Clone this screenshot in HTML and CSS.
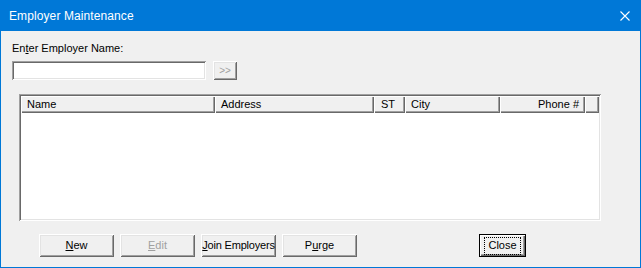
FILE: index.html
```html
<!DOCTYPE html>
<html>
<head>
<meta charset="utf-8">
<link rel="stylesheet" href="styles.css">
</head>
<body>
<div class="window">
  <div class="titlebar">
    <span class="title">Employer Maintenance</span>
    <svg class="close-x" width="10" height="10" viewBox="0 0 10 10"><path d="M0.5 0.5 L9.5 9.5 M9.5 0.5 L0.5 9.5" stroke="#fff" stroke-width="1.1" fill="none"/></svg>
  </div>
  <div class="content">
    <div class="label">En<u>t</u>er Employer Name:</div>
    <div class="search-row">
      <div class="textbox"></div>
      <div class="btn small disabled">&gt;&gt;</div>
    </div>
    <div class="listview">
      <div class="header">
        <div class="hcell c-name">Name</div>
        <div class="hcell c-addr">Address</div>
        <div class="hcell c-st">ST</div>
        <div class="hcell c-city">City</div>
        <div class="hcell c-phone">Phone #</div>
        <div class="hcell c-rest"></div>
      </div>
      <div class="rows"></div>
    </div>
    <div class="buttons">
      <div class="btn b-new"><u>N</u>ew</div>
      <div class="btn b-edit disabled"><u>E</u>dit</div>
      <div class="btn b-join"><u>J</u>oin Employers</div>
      <div class="btn b-purge">P<u>u</u>rge</div>
      <div class="btn default b-close"><span class="focus">Close</span></div>
    </div>
  </div>
</div>
</body>
</html>
```
FILE: styles.css
```css
html, body {
  margin: 0;
  padding: 0;
  background: #f0f0f0;
}
.window {
  width: 641px;
  height: 268px;
  box-sizing: border-box;
  border: 1px solid #0078d7;
  border-top: none;
  background: #f0f0f0;
  display: flex;
  flex-direction: column;
  font-family: "Liberation Sans", Arial, sans-serif;
  font-size: 11px;
  color: #000;
}
.titlebar {
  height: 31px;
  background: #0078d7;
  margin: 0 -1px;
  display: flex;
  align-items: center;
  justify-content: space-between;
  padding: 0 11px 0 9px;
  flex-shrink: 0;
}
.title {
  color: #fff;
  font-size: 12px;
  font-family: "Liberation Sans", Arial, sans-serif;
  letter-spacing: 0.1px;
}
.close-x {
  display: block;
}
.content {
  flex: 1;
  display: flex;
  flex-direction: column;
  padding: 11px 0 0 11px;
}
.label {
  line-height: 13px;
  height: 13px;
}
.label u, .btn u {
  text-decoration: underline;
  text-underline-offset: 1px;
}
.search-row {
  display: flex;
  gap: 7px;
  margin-top: 6px;
}
.textbox {
  width: 194px;
  height: 19px;
  box-sizing: border-box;
  background: #fff;
  box-shadow: inset 1px 1px #a0a0a0, inset -1px -1px #fff, inset 2px 2px #696969, inset -2px -2px #e3e3e3;
}
.btn {
  box-sizing: border-box;
  background: #f0f0f0;
  display: flex;
  align-items: center;
  justify-content: center;
  box-shadow: inset 1px 1px #fff, inset -1px -1px #696969, inset 2px 2px #e3e3e3, inset -2px -2px #a0a0a0;
  line-height: 13px;
  white-space: nowrap;
}
.btn.small {
  width: 24px;
  height: 19px;
  color: #a0a0a0;
  font-size: 10px;
  letter-spacing: 0;
  padding-bottom: 1px;
}
.btn.disabled {
  color: #a0a0a0;
}
.listview {
  margin: 14px 0 0 7px;
  width: 582px;
  height: 127px;
  box-sizing: border-box;
  padding: 2px;
  background: #fff;
  box-shadow: inset 1px 1px #a0a0a0, inset -1px -1px #fff, inset 2px 2px #696969, inset -2px -2px #e3e3e3;
  display: flex;
  flex-direction: column;
}
.header {
  display: flex;
  height: 17px;
  flex-shrink: 0;
}
.hcell {
  box-sizing: border-box;
  background: #f0f0f0;
  height: 17px;
  line-height: 15px;
  padding: 1px 6px 0 6px;
  box-shadow: inset 1px 1px #fff, inset -1px -1px #696969, inset -2px -2px #a0a0a0;
  white-space: nowrap;
  overflow: hidden;
}
.c-name { width: 194px; }
.c-addr { width: 159px; }
.c-st { width: 31px; padding-left: 7px; }
.c-city { width: 95px; }
.c-phone { width: 85px; text-align: right; }
.c-rest { width: 14px; }
.rows {
  flex: 1;
}
.buttons {
  display: flex;
  margin-top: 13px;
  padding-left: 27px;
}
.buttons .btn {
  width: 75px;
  height: 23px;
}
.b-edit, .b-join, .b-purge {
  margin-left: 6px;
}
.b-join {
  letter-spacing: -0.2px;
}
.btn.default {
  margin-left: 122px;
  width: 47px;
  box-shadow: inset 0 0 0 1px #000, inset 2px 2px #fff, inset -2px -2px #696969, inset -3px -3px #a0a0a0;
}
.focus {
  display: block;
  outline: 1px dotted #000;
  outline-offset: 0;
  padding: 1px 3px 2px 3px;
  line-height: 13px;
}
```
